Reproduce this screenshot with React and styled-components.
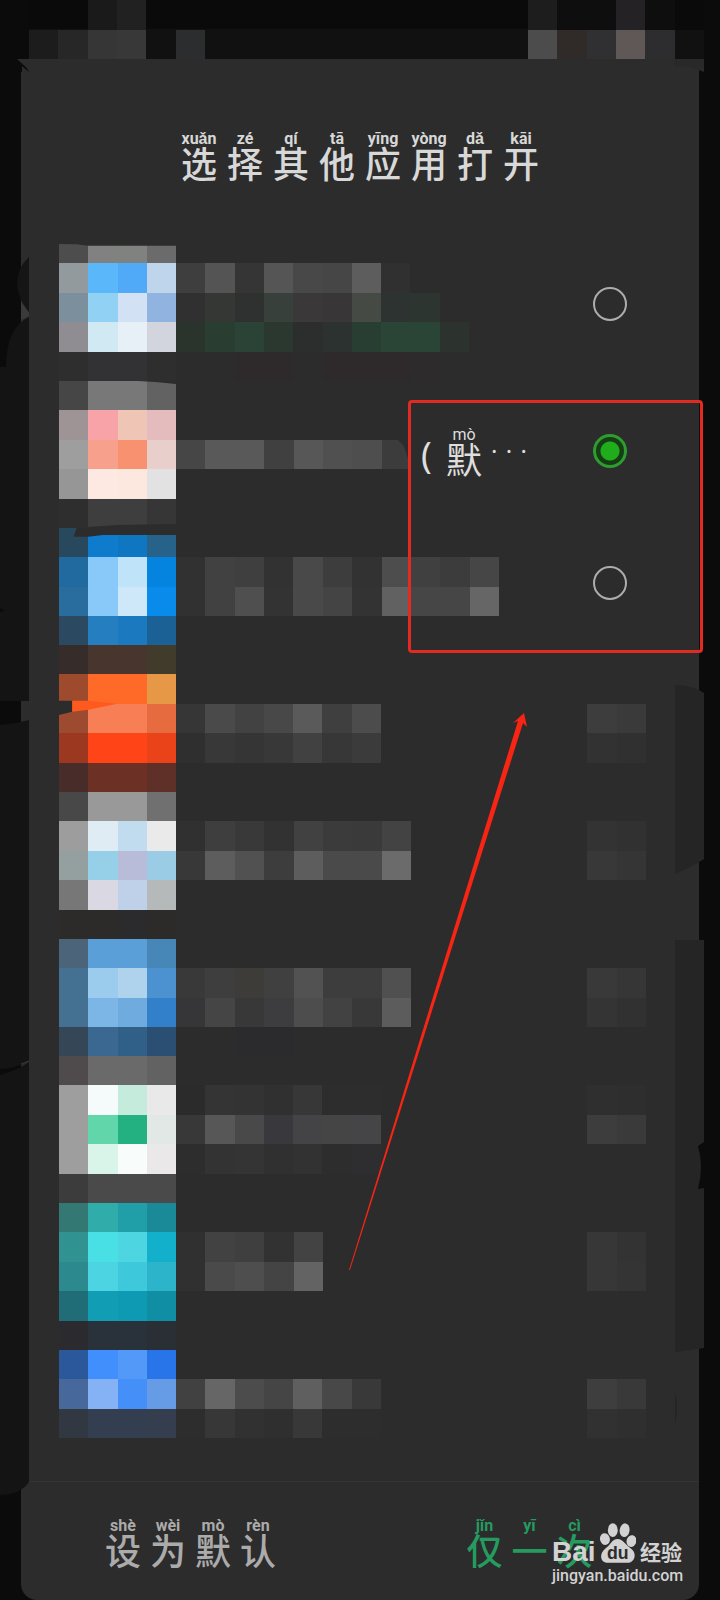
import React, { useState } from "react";
import styled, { createGlobalStyle } from "styled-components";

const GlobalStyle = createGlobalStyle`
  * {
    box-sizing: border-box;
  }

  body {
    margin: 0;
    background: #0b0b0b;
    font-family: "Noto Sans", "Noto Sans CJK SC", sans-serif;
  }
`;

const Page = styled.div`
  position: relative;
  min-height: 100vh;
  display: flex;
  flex-direction: column;
  overflow: hidden;
`;

const StatusBar = styled.div`
  display: flex;
  justify-content: space-between;
  height: 59px;
  margin: 0 16px 0 29px;
  background: linear-gradient(#0a0a0a 29px, #111111 29px);
`;

const Sheet = styled.main`
  flex: 1;
  display: flex;
  flex-direction: column;
  margin: 0 21px;
  background: #2c2c2c;
  border-radius: 0 0 16px 16px;
`;

const Header = styled.header`
  display: flex;
  justify-content: center;
  height: 175px;
  padding-top: 72px;
`;

const Title = styled.h1`
  display: flex;
  margin: 0;
  color: #d8d8d8;
  font-weight: 500;
`;

const Ruby = styled.ruby`
  display: flex;
  flex-direction: column-reverse;
  align-items: center;
  justify-content: flex-end;
  width: ${props => props.$width || 45}px;
  font-size: 36px;
  line-height: 36px;

  rt {
    display: block;
    font-family: Roboto, sans-serif;
    font-size: 16px;
    font-weight: ${props => props.$light ? 400 : 700};
    line-height: 16px;
    white-space: nowrap;
  }
`;

const List = styled.ul`
  position: relative;
  flex: 1;
  margin: 0;
  padding: 0 0 13px;
  list-style-type: none;
`;

const ListItem = styled.li`
  height: ${props => props.$tall ? 147 : 117}px;

  label {
    display: flex;
    height: 100%;
    padding: 0 53px 0 38px;
    cursor: pointer;
  }
`;

const Name = styled.span`
  flex: 1;
  display: flex;
  min-width: 0;
`;

const Note = styled.span`
  display: flex;
  align-items: flex-start;
  padding: 46px 0 0 10px;
  color: #dedede;
  font-size: 36px;
  line-height: 36px;
`;

const Mark = styled.span`
  width: 20px;
  padding-top: 10px;
`;

const Dots = styled.span`
  display: flex;
  justify-content: space-between;
  width: 36px;
  margin-left: 4px;
  font-size: 24px;
  line-height: 48px;
`;

const Control = styled.span`
  display: flex;
  align-items: center;
  width: 59px;
  flex-shrink: 0;
`;

const Radio = styled.input`
  appearance: none;
  width: 34px;
  height: 34px;
  margin: 0 6px 8px;
  border: 2px solid #adadad;
  border-radius: 50%;
  cursor: pointer;

  &:checked {
    border: 3px solid #2f9c2f;
    background: radial-gradient(circle, #1fad1b 9px, #173d17 10px);
  }
`;

const Frame = styled.div`
  position: absolute;
  top: 166px;
  right: -4px;
  width: 295px;
  height: 253px;
  border: 3px solid #e12b22;
  border-radius: 4px;
  pointer-events: none;
`;

const Arrow = styled.svg`
  position: absolute;
  top: 477px;
  right: 171px;
  pointer-events: none;
`;

const Footer = styled.footer`
  display: flex;
  height: 119px;
  border-top: 1px solid #343434;
`;

const FooterButton = styled.button`
  flex: 1;
  display: flex;
  justify-content: center;
  padding: 36px 0 0;
  border: none;
  background: none;
  color: ${props => props.$accent ? "#259b60" : "#ababab"};
  font-family: inherit;
  font-weight: 500;
  cursor: pointer;
`;

const Edge = styled.svg`
  position: absolute;
  top: 0;
  left: ${props => props.$right ? "auto" : 0};
  right: ${props => props.$right ? "16px" : "auto"};
  pointer-events: none;
`;

const Watermark = styled.a`
  position: absolute;
  right: 38px;
  bottom: 13px;
  width: 130px;
  color: #d2d2d2;
  text-decoration: none;
  white-space: nowrap;
`;

const Brand = styled.span`
  display: flex;
  align-items: flex-end;
  gap: 4px;
  height: 43px;
  font: 700 28px/26px "Liberation Sans", sans-serif;

  strong {
    font: 700 21px/28px "Noto Sans CJK SC", sans-serif;
  }
`;

const Site = styled.span`
  display: block;
  font: 500 16px/22px Roboto, sans-serif;
`;

// Two digits are a grey level, "." leaves the cell empty
const shade = value => value.length === 2 ? `#${value}${value}${value}` : `#${value}`;

function Mosaic({ rows, cols, count = rows.length, tears = [] }) {
  const width = Math.round(cols * 88 / 3);
  const height = Math.round(count * 88 / 3);

  return (
    <svg
      width={width}
      height={height}
      viewBox={`0 0 ${cols} ${count}`}
      preserveAspectRatio="none"
      shapeRendering="crispEdges"
      style={{ flexShrink: 0 }}
      aria-hidden="true"
    >
      {rows.map((row, y) => row.split(" ").map((cell, x) => (
        cell && cell !== "." &&
          <rect key={`${x}-${y}`} x={x} y={y} width="1" height="1" fill={shade(cell)} />
      )))}
      {tears.map(([points, color]) => (
        <polygon key={points} points={points} fill={shade(color)} shapeRendering="auto" />
      ))}
    </svg>
  );
}

const apps = [
  {
    size: 5,
    control: true,
    icon: ["4d 808180 808280 6b", "929a9e 59b7fa 50aaf7 bed5eb", "7b8f9c 91d2f4 d2e2f4 90b4df", "8f8d92 d0e9f3 e7eff7 d3d5de", "2e 323234 323234 2e"],
    tears: [["0,0 4,0 4,.4 1,.4 .6,.35 0,.34", "2c"]],
    label: ["", "3e 54 35 55 48 46 5d 30", "30 353735 2f3030 37403b 3a3838 383636 454a45 2d3331 2c3530", "2b332d 293d30 2b4336 2b3830 2c2d2d 2c3230 293e33 2a4535 2a4535 2c322d", ". . 2e2a2b 2e2a2b . 2e2a2b 2e2a2b 2e2a2b 2d2b2b"],
  },
  {
    size: 5,
    control: true,
    note: true,
    icon: ["46 78 78 62", "9f9495 f7a3a7 efc6b5 e4bcbd", "9e f7a08b f8916f e9cfcc", "96 fde9e1 fce8df e2", "2e 3e 3e 36"],
    tears: [["2.7,0 4,0 4,.1 3.3,.03", "2c"], ["1,4.97 2,4.9 4,4.86 4,5 1,5", "2c"]],
    label: ["", "", "46 59 59 40 57 50 4e 3c"],
    labelTears: [["7.55,2 8,2 8,3 7.87,2.55 7.75,2.2", "2c"]],
  },
  {
    size: 4,
    control: true,
    icon: ["28485e 0e7bcd 0f77c2 27628a", "206a9f 88c9f9 bfe3f9 0584df", "286d9e 88c9f9 cfe8f9 088bea", "2b4960 257ebf 1b7abf 1b6195"],
    tears: [["0.6,0 4,0 4,.24 1.5,.24 1,.3 .5,.3", "2c"]],
    label: ["", "31 41 3f 32 49 3d 32 4d 40 3c 46", "31 41 4f 33 49 44 33 61 46 46 66"],
  },
  {
    size: 5,
    icon: ["362d2b 48352d 48352d 403b2b", "9d4b2c ff6a29 ff6a29 e79847", "9d4b30 f87f55 f87f55 e66c40", "9d3820 ff4517 ff4517 eb4319", "482c29 6d3024 6d3024 5e3027"],
    tears: [["0,1.9 .45,1.9 .45,2.27 0,2.38", "2c"], [".45,1.9 1,1.9 2,2 1,2.2 .45,2.27", "ff5a1d"]],
    label: ["", "", "36 4a 42 48 5a 3f 4c", "2f 38 35 38 41 37 3b"],
    switchCells: ["", "", "3d 3a", "32 30"],
  },
  {
    size: 5,
    icon: ["48 99 99 70", "9d dfecf3 c0dcee ea", "94a09f 95cfe8 b8bcd9 9acce5", "77 dad8e3 bed1e8 b5b9ba", "2d2a2a 2d2a2a 2b2a2d 2d2a2a"],
    label: ["", "30 3e 39 32 41 3b 3a 43", "38 5d 51 3d 5d 4a 4a 6b"],
    switchCells: ["", "33 31", "38 35"],
  },
  {
    size: 4,
    icon: ["4c647a 5a9fd8 5a9fd8 4787b8", "447091 9bcced afd3ed 4c92d0", "447091 7cb6e6 70abe0 3280c9", "354757 3b6890 305f88 2a4f73"],
    label: ["", "39 3e 3d3c38 40 52 3d 3d 50", "363638 45 38 3d3d40 4d 42 38 5c", ". . 2b2b2e 2b2b2e"],
    switchCells: ["", "39 36", "34 31"],
  },
  {
    size: 5,
    icon: ["4f4b4c 6a 6a 62", "9e f5fbfa c4ebdc e8e9e8", "9e 60d6aa 23b181 e1e8e6", "9e d9f4e9 f8fcfa ebe8e9", "3c 4a 4a 4a"],
    label: ["", "2b 34 33 30 37 2d 2d", "38 57 49 39393d 444447 45 454547", "2d 33 34 30 32 2d 2e2e31"],
    switchCells: ["", "2f 2e", "3d 3a"],
  },
  {
    size: 5,
    icon: ["347873 30adab 219fa9 1a8998", "309392 49e0e5 4dd5e1 12b0cb", "2c898e 4cd4e3 3dc8dc 2bb4ca", "216d77 119eb4 0e9ab3 108ea3", "2b2b2f 29313a 29313a 2a2f35"],
    label: ["", "30 42 3f 32 43", "30 4a 4e 44 63"],
    switchCells: ["", "37 33", "37 34"],
  },
  {
    size: 4,
    icon: ["2b589a 418ffd 5399f8 2775e8", "46689b 84b2f4 458ff8 659ce5", "323841 333f50 333f50 343e4e"],
    label: ["", "41 66 4c 45 5f 48 39", "2d 37 31 2f 38 2d 2d"],
    switchCells: ["", "3e 39", "31 2f"],
  },
];

const title = [["选", "xuǎn"], ["择", "zé"], ["其", "qí"], ["他", "tā"], ["应", "yīng"], ["用", "yòng"], ["打", "dǎ"], ["开", "kāi"]];
const always = [["设", "shè"], ["为", "wèi"], ["默", "mò"], ["认", "rèn"]];
const once = [["仅", "jǐn"], ["一", "yī"], ["次", "cì"]];

function Pinyin({ words, width }) {
  return words.map(([char, sound]) => (
    <Ruby key={char} $width={width}>{char}<rt>{sound}</rt></Ruby>
  ));
}

function AppRow({ app, index, selected, choose }) {
  const cols = app.note ? 8 : Math.max(...app.label.map(row => row.split(" ").length));

  return (
    <ListItem $tall={app.size === 5}>
      <label>
        <Mosaic rows={app.icon} cols={4} count={app.size} tears={app.tears} />
        <Name>
          <Mosaic rows={app.label} cols={cols} count={app.size} tears={app.labelTears} />
          {app.note && (
            <Note>
              <Mark>(</Mark>
              <Ruby $width={46} $light>默<rt>mò</rt></Ruby>
              <Dots><span>·</span><span>·</span><span>·</span></Dots>
            </Note>
          )}
        </Name>
        <Control>
          {app.control
            ? <Radio
                type="radio"
                name="app"
                aria-label={`${index + 1}`}
                checked={selected === index}
                onChange={() => choose(index)}
              />
            : <Mosaic rows={app.switchCells} cols={2} count={app.size} />}
        </Control>
      </label>
    </ListItem>
  );
}

function App() {
  const [selected, setSelected] = useState(1);

  return (
    <Page>
      <GlobalStyle />
      <StatusBar>
        <Mosaic cols={6} rows={[". . 1a 21 . .", "1c 27 36 38 . 2c2d2f"]} />
        <Mosaic cols={6} rows={["1d 0e 0e 242224 0e 0a", "4c 302b28 303032 5f5856 2d2d2f 11"]} />
      </StatusBar>
      <Sheet>
        <Header>
          <Title><Pinyin words={title} width={46} /></Title>
        </Header>
        <List>
          {apps.map((app, index) => (
            <AppRow key={index} app={app} index={index} selected={selected} choose={setSelected} />
          ))}
          <Frame />
          <Arrow width="180" height="560" viewBox="0 0 180 560" aria-hidden="true">
            <path d="M1 559 L170 10 L165 12 L176 2 L179 16 L175 12 L2 559 Z" fill="#f82414" />
          </Arrow>
        </List>
        <Footer>
          <FooterButton type="button"><Pinyin words={always} /></FooterButton>
          <FooterButton type="button" $accent><Pinyin words={once} /></FooterButton>
        </Footer>
      </Sheet>

      {/* rough edges of the sheet */}
      <Edge width="30" height="1500" viewBox="0 0 30 1500" aria-hidden="true">
        <path d="M17 59 H22 L29 72 L22 66 V72 H17 Z" fill="#0b0b0b" />
        <path d="M17 59 H29 V70 Z" fill="#2c2c2c" />
        <path d="M29 257 Q17 268 17 284 Q18 299 29 312 Z" fill="#151515" />
        <path d="M21 302 L29 313 V316 L21 320 Z" fill="#3a3a3a" />
        <path d="M29 317 Q6 328 6 367 H0 V701 H29 Z" fill="#141414" />
        <path d="M0 725 Q15 724 29 720 V1061 Q14 1069 0 1069 Z" fill="#141414" />
        <path d="M0 1075 Q18 1070 29 1062 V1482 Q20 1495 0 1495 Z" fill="#141414" />
        <path d="M21 1064 L29 1061" stroke="#3a3a3a" />
        <path d="M0 608 L5 611 L0 612 Z" fill="#0b0b0b" />
      </Edge>
      <Edge $right width="30" height="1440" viewBox="674 0 30 1440" aria-hidden="true">
        <path d="M674 59 H704 V72 Q690 66 674 66 Z" fill="#292929" />
        <path d="M675 685 Q692 685 704 693 V859 Q692 867 675 874 Z" fill="#252525" />
        <path d="M675 940 H704 V1348 L675 1352 Z" fill="#252525" />
        <path d="M704 1142 L698 1146 Q704 1167 698 1189 L704 1188 Z" fill="#0b0b0b" />
        <path d="M675 1393 Q679 1408 675 1424 Z" fill="#232323" />
      </Edge>

      <Watermark href="#jingyan">
        <Brand>
          Bai
          <svg width="37" height="43" viewBox="0 0 37 43" aria-hidden="true">
            <g fill="#d2d2d2">
              <ellipse cx="5" cy="17" rx="5" ry="6" transform="rotate(-12 5 17)" />
              <ellipse cx="13" cy="8" rx="5" ry="7" />
              <ellipse cx="25" cy="8" rx="5" ry="7" transform="rotate(8 25 8)" />
              <ellipse cx="32" cy="19" rx="5" ry="6" transform="rotate(14 32 19)" />
              <path d="M18 17 C23 17 26 23 32 27 C38 32 35 41 28 41 H8 C0 41 -1 32 5 27 C11 23 12 17 18 17 Z" />
            </g>
            <text x="18" y="37" textAnchor="middle" fill="#2c2c2c" fontSize="18" fontWeight="700" fontFamily="Liberation Sans">du</text>
          </svg>
          <strong>经验</strong>
        </Brand>
        <Site>jingyan.baidu.com</Site>
      </Watermark>
    </Page>
  );
}

export default App;
